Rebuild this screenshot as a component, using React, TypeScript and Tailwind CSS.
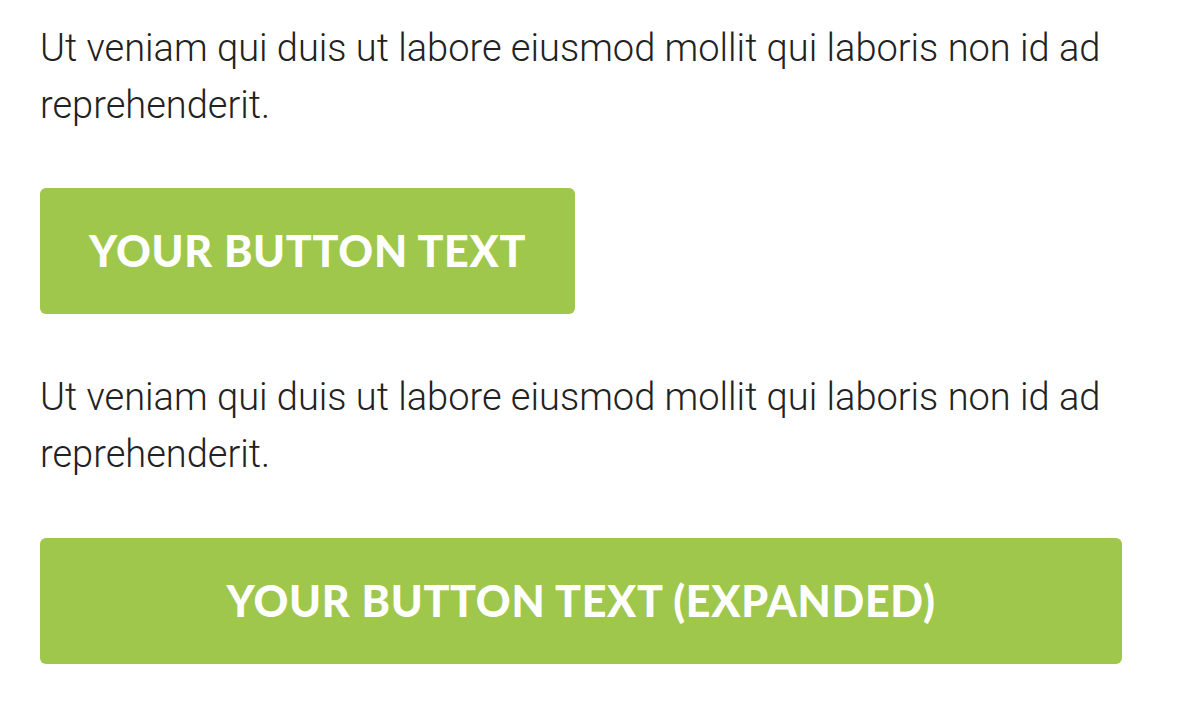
export default function App() {
  return (
    <div className="min-h-screen bg-white px-[40px] pt-[20px] font-['Roboto',sans-serif]">
      <p className="text-[38px] leading-[57px] font-light text-[#222]">
        Ut veniam qui duis ut labore eiusmod mollit qui laboris non id ad reprehenderit.
      </p>
      <div className="mt-[54px] flex">
        <a className="flex h-[126px] w-[535px] items-center justify-center rounded-[6px] bg-[#9ec74b] font-['Lato',sans-serif] text-[43px] font-black tracking-[0.7px] text-white">
          YOUR BUTTON TEXT
        </a>
      </div>
      <p className="mt-[55px] text-[38px] leading-[57px] font-light text-[#222]">
        Ut veniam qui duis ut labore eiusmod mollit qui laboris non id ad reprehenderit.
      </p>
      <div className="mt-[55px] flex w-[1082px]">
        <a className="flex h-[126px] w-full items-center justify-center rounded-[6px] bg-[#9ec74b] font-['Lato',sans-serif] text-[43px] font-black tracking-[0.7px] text-white">
          YOUR BUTTON TEXT (EXPANDED)
        </a>
      </div>
    </div>
  );
}
